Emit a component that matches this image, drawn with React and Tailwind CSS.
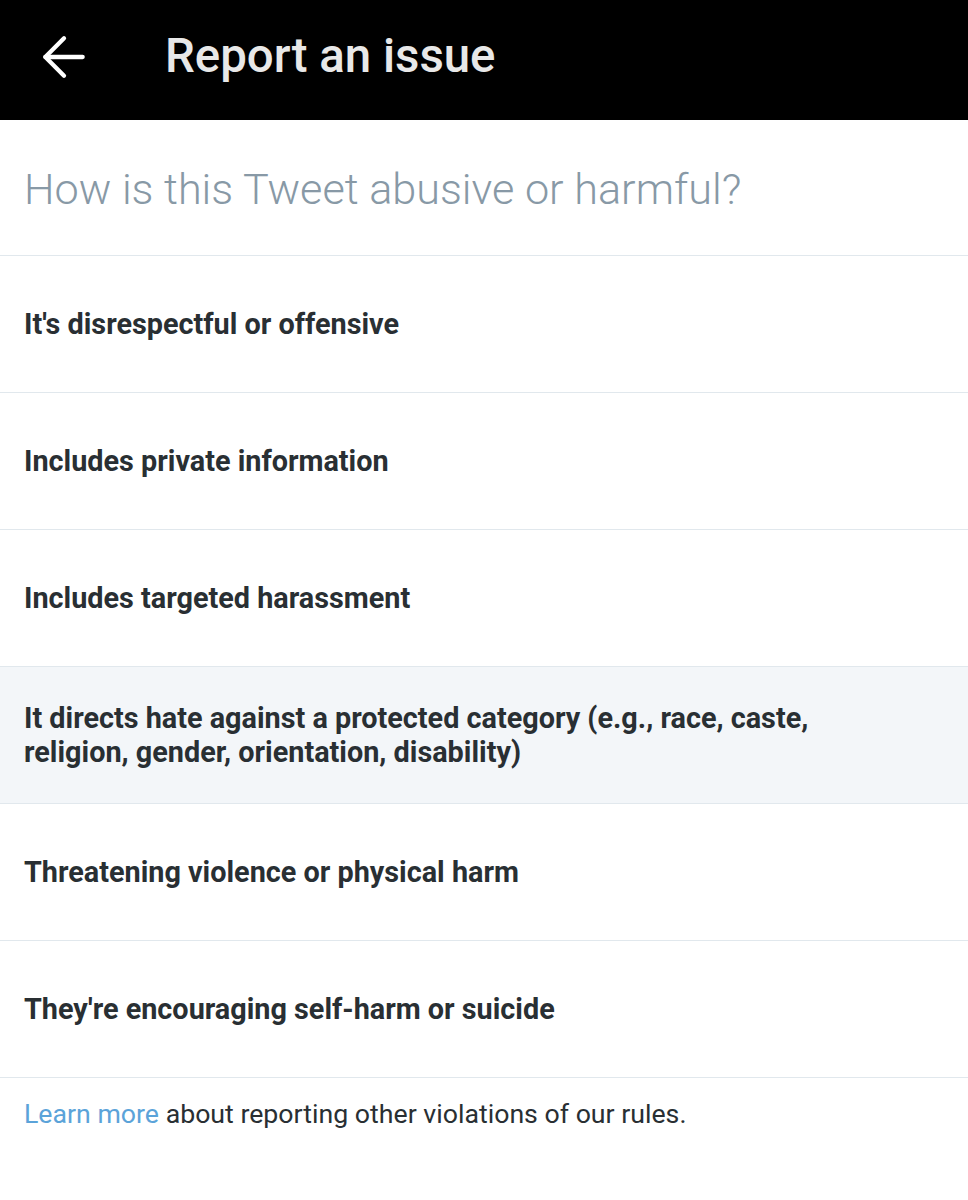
import { ArrowLeft } from 'lucide-react'

const reasons = [
  "It's disrespectful or offensive",
  'Includes private information',
  'Includes targeted harassment',
  'It directs hate against a protected category (e.g., race, caste, religion, gender, orientation, disability)',
  'Threatening violence or physical harm',
  "They're encouraging self-harm or suicide",
]

const ReasonRow = ({ label, active }) => (
  <button
    className={`flex h-[137px] w-full items-center border-b border-[#e1e8ed] px-6 text-left ${
      active ? 'bg-[#f3f6f9]' : 'bg-white'
    }`}
  >
    <span className="max-w-[800px] text-[28.8px] font-bold leading-[34px] text-[#292f33]">{label}</span>
  </button>
)

export default function App() {
  return (
    <div className="min-h-[1200px] w-[968px] bg-white font-['Roboto',sans-serif]">
      <header className="flex h-[120px] items-center bg-black pb-[6px]">
        <div className="flex w-[165px] items-center pl-[32px]">
          <ArrowLeft size={64} className="text-white" strokeWidth={1.6} />
        </div>
        <h1 className="text-[47.4px] font-medium text-[#e8e8e8]">Report an issue</h1>
      </header>

      <div className="flex h-[136px] items-center border-b border-[#e1e8ed] px-6 pt-[6px]">
        <h2 className="text-[43.2px] font-light text-[#8899a6]">How is this Tweet abusive or harmful?</h2>
      </div>

      <div>
        {reasons.map((r, i) => (
          <ReasonRow key={r} label={r} active={i === 3} />
        ))}
      </div>

      <p className="px-6 pt-[16px] text-[26.7px] text-[#292f33]">
        <a className="text-[#5ba3d9]">Learn more</a> about reporting other violations of our rules.
      </p>
    </div>
  )
}
